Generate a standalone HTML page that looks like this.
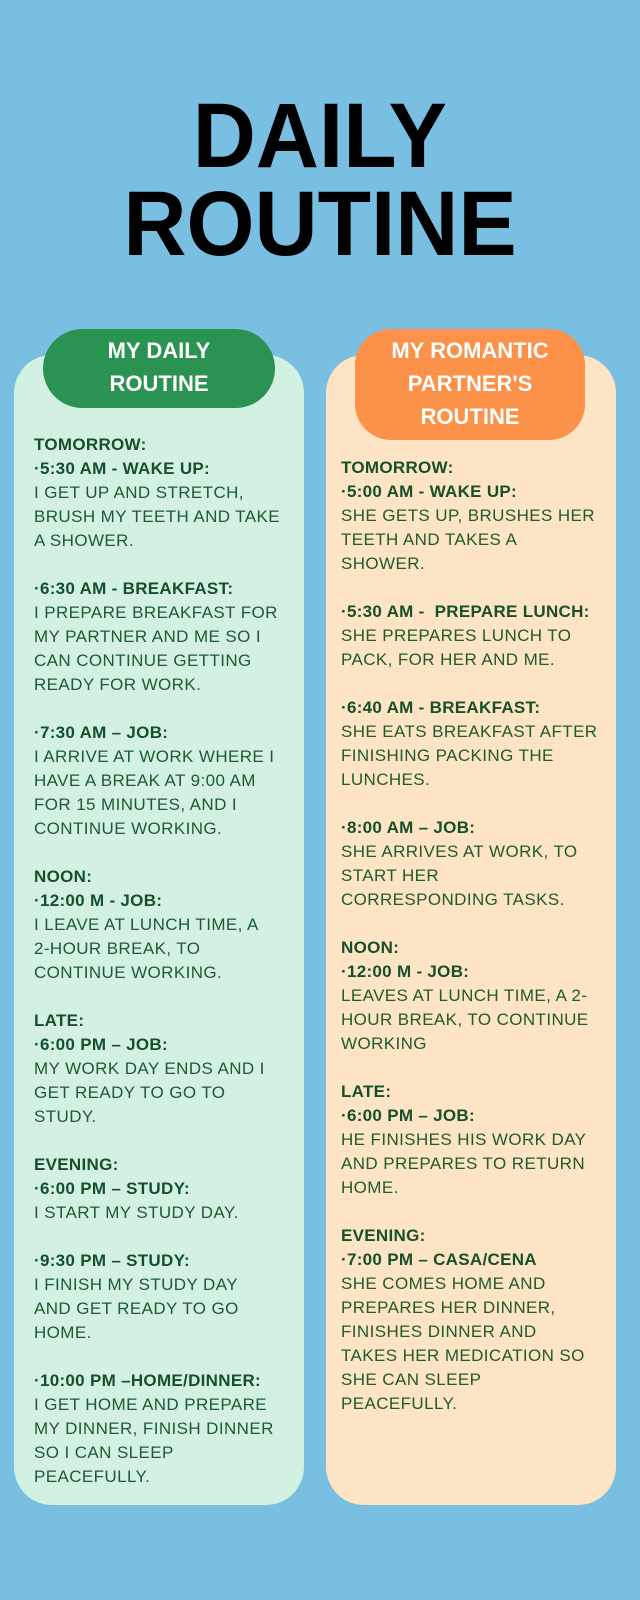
<!DOCTYPE html>
<html><head><meta charset="utf-8"><style>
*{margin:0;padding:0;box-sizing:border-box}
body{width:640px;height:1600px;background:#79bfe1;position:relative;overflow:hidden;font-family:"Liberation Sans",sans-serif}
.t{position:absolute;left:0;width:640px;text-align:center;font-weight:bold;color:#000;font-size:92px;line-height:92px}
.t span{display:inline-block;transform:scaleX(0.95)}
.card{position:absolute;top:355px;height:1150px;border-radius:38px}
.l{left:14px;width:290px;background:#d2f1e3}
.r{left:326px;width:290px;background:#fde4c4}
.pill{position:absolute;color:#fff;font-weight:bold;font-size:22px;line-height:33px;text-align:center;border-radius:40px}
.pl{left:43px;top:329px;width:232px;height:79px;background:#2b9352;padding-top:5px}
.pr{left:355px;top:329px;width:230px;height:111px;background:#fc9149;padding-top:5px;border-radius:36px}
.txt{position:absolute;font-size:17px;line-height:24px;color:#1f5a30;white-space:nowrap;letter-spacing:0.4px}
.txt b{color:#15502a;letter-spacing:0.3px}
.tl{left:34px;top:433px}
.tr{left:341px;top:456px}
</style></head><body>
<div class="t" style="top:90px"><span>DAILY</span></div>
<div class="t" style="top:178px"><span>ROUTINE</span></div>
<div class="card l"></div>
<div class="card r"></div>
<div class="pill pl">MY DAILY<br>ROUTINE</div>
<div class="pill pr">MY ROMANTIC<br>PARTNER'S<br>ROUTINE</div>
<div class="txt tl"><b>TOMORROW:</b><br><b>·5:30 AM - WAKE UP:</b><br>I GET UP AND STRETCH,<br>BRUSH MY TEETH AND TAKE<br>A SHOWER.<br><br><b>·6:30 AM - BREAKFAST:</b><br>I PREPARE BREAKFAST FOR<br>MY PARTNER AND ME SO I<br>CAN CONTINUE GETTING<br>READY FOR WORK.<br><br><b>·7:30 AM – JOB:</b><br>I ARRIVE AT WORK WHERE I<br>HAVE A BREAK AT 9:00 AM<br>FOR 15 MINUTES, AND I<br>CONTINUE WORKING.<br><br><b>NOON:</b><br><b>·12:00 M - JOB:</b><br>I LEAVE AT LUNCH TIME, A<br>2-HOUR BREAK, TO<br>CONTINUE WORKING.<br><br><b>LATE:</b><br><b>·6:00 PM – JOB:</b><br>MY WORK DAY ENDS AND I<br>GET READY TO GO TO<br>STUDY.<br><br><b>EVENING:</b><br><b>·6:00 PM – STUDY:</b><br>I START MY STUDY DAY.<br><br><b>·9:30 PM – STUDY:</b><br>I FINISH MY STUDY DAY<br>AND GET READY TO GO<br>HOME.<br><br><b>·10:00 PM –HOME/DINNER:</b><br>I GET HOME AND PREPARE<br>MY DINNER, FINISH DINNER<br>SO I CAN SLEEP<br>PEACEFULLY.</div>
<div class="txt tr"><b>TOMORROW:</b><br><b>·5:00 AM - WAKE UP:</b><br>SHE GETS UP, BRUSHES HER<br>TEETH AND TAKES A<br>SHOWER.<br><br><b>·5:30 AM - &nbsp;PREPARE LUNCH:</b><br>SHE PREPARES LUNCH TO<br>PACK, FOR HER AND ME.<br><br><b>·6:40 AM - BREAKFAST:</b><br>SHE EATS BREAKFAST AFTER<br>FINISHING PACKING THE<br>LUNCHES.<br><br><b>·8:00 AM – JOB:</b><br>SHE ARRIVES AT WORK, TO<br>START HER<br>CORRESPONDING TASKS.<br><br><b>NOON:</b><br><b>·12:00 M - JOB:</b><br>LEAVES AT LUNCH TIME, A 2-<br>HOUR BREAK, TO CONTINUE<br>WORKING<br><br><b>LATE:</b><br><b>·6:00 PM – JOB:</b><br>HE FINISHES HIS WORK DAY<br>AND PREPARES TO RETURN<br>HOME.<br><br><b>EVENING:</b><br><b>·7:00 PM – CASA/CENA</b><br>SHE COMES HOME AND<br>PREPARES HER DINNER,<br>FINISHES DINNER AND<br>TAKES HER MEDICATION SO<br>SHE CAN SLEEP<br>PEACEFULLY.</div>
</body></html>
